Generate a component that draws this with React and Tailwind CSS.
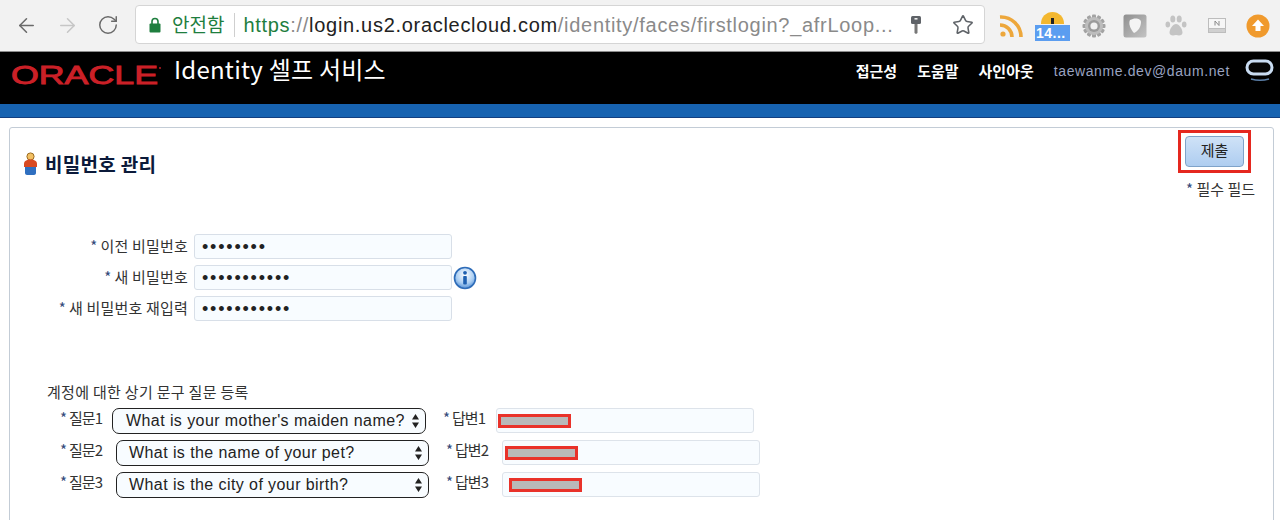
import React from "react";
import { ArrowLeft, ArrowRight, RotateCw, Star } from "lucide-react";

const sans = "font-['Liberation_Sans','Noto_Sans_CJK_KR',sans-serif]";
const kr = "font-['Noto_Sans_CJK_KR',sans-serif]";

function Lock() {
  return (
    <svg width="14" height="18" viewBox="0 0 14 18" className="ml-[12px] shrink-0">
      <path d="M4 8V5.500a3 3 0 0 1 6 0V8" fill="none" stroke="#1e7e3e" strokeWidth="1.600" />
      <rect x="1.500" y="7.500" width="11" height="9" rx="1" fill="#1e7e3e" />
    </svg>
  );
}

function Key() {
  return (
    <svg width="12" height="20" viewBox="0 0 12 20">
      <rect x="1" y="1" width="10" height="8" rx="1.500" fill="#5f6368" />
      <rect x="4.500" y="3" width="3" height="1.600" fill="#eee" />
      <path d="M4.500 9h3v9l-1.500 1-1.500-1z" fill="#777" />
    </svg>
  );
}

function Rss() {
  return (
    <svg width="24" height="24" viewBox="0 0 24 24" fill="none" stroke="#eda73b" strokeWidth="3.600">
      <circle cx="4" cy="20" r="2.600" fill="#eda73b" stroke="none" />
      <path d="M1 11a12 12 0 0 1 12 12" />
      <path d="M1 3a20 20 0 0 1 21 20" />
    </svg>
  );
}

function KeeperBadge() {
  return (
    <div className="relative w-[36px] h-[30px] shrink-0">
      <div className="absolute left-[6px] top-0 w-[23px] h-[12px] rounded-t-full bg-[#f3b72f]" />
      <div className="absolute left-[16px] top-[6px] w-[3px] h-[6px] bg-[#222]" />
      <div className={`absolute left-0 top-[13px] w-[35px] h-[16px] bg-[#5b9df0] text-white text-[14px] leading-[16px] font-bold pl-[1px] tracking-[0.5px] ${sans}`}>14...</div>
    </div>
  );
}

function Gear() {
  const teeth = [0, 30, 60, 90, 120, 150];
  return (
    <svg width="24" height="24" viewBox="0 0 24 24">
      {teeth.map((a) => (
        <rect key={a} x="10" y="0.500" width="4" height="23" rx="1" fill="#a3a3a3" transform={`rotate(${a} 12 12)`} />
      ))}
      <circle cx="12" cy="12" r="9" fill="#bdbdbd" />
      <circle cx="12" cy="12" r="6" fill="#9a9a9a" />
      <circle cx="12" cy="12" r="3.600" fill="#f0f0f0" />
    </svg>
  );
}

function ShieldSquare() {
  return (
    <svg width="24" height="24" viewBox="0 0 24 24">
      <defs>
        <linearGradient id="sq" x1="0" y1="0" x2="1" y2="1">
          <stop offset="0" stopColor="#8f8f8f" />
          <stop offset="1" stopColor="#c4c4c4" />
        </linearGradient>
      </defs>
      <rect x="0.500" y="0.500" width="23" height="23" rx="2.500" fill="url(#sq)" />
      <path d="M7 6c5-3 11-1.500 11 2 0 5-3 9-7 11-3-3-6-9-4-13z" fill="#f4f4f4" />
    </svg>
  );
}

function Paw() {
  return (
    <svg width="22" height="22" viewBox="0 0 22 22" fill="#c4c4c4">
      <ellipse cx="2.800" cy="9.500" rx="2.300" ry="3" />
      <ellipse cx="7.800" cy="4" rx="2.500" ry="3.500" />
      <ellipse cx="14.200" cy="4" rx="2.500" ry="3.500" />
      <ellipse cx="19.200" cy="9.500" rx="2.300" ry="3" />
      <path d="M11 9c3 0 6.500 5 6.500 8.500 0 3-3 3.500-6.500 2.500-3.500 1-6.500.5-6.500-2.500C4.500 14 8 9 11 9z" />
    </svg>
  );
}

function Monitor() {
  return (
    <svg width="18" height="15" viewBox="0 0 18 15">
      <rect x="0.500" y="0.500" width="17" height="14" fill="#f6f6f6" stroke="#bdbdbd" />
      <rect x="0.500" y="10.500" width="17" height="4" fill="#d0d0d0" stroke="#bdbdbd" />
      <path d="M7 7.500V3l4 4.500V3" fill="none" stroke="#8a8a8a" strokeWidth="1" />
    </svg>
  );
}

function UpCircle() {
  return (
    <svg width="24" height="24" viewBox="0 0 24 24">
      <circle cx="12" cy="12" r="11.500" fill="#f09a2d" />
      <path d="M12 5.500l6 6.500h-3.500v5h-5v-5H6z" fill="#fff" />
    </svg>
  );
}

function BrowserBar() {
  return (
    <div className="h-[52px] bg-[#f2f2f2] border-b border-[#8c8c8c] flex items-center pl-[15px] shrink-0">
      <ArrowLeft size={23} strokeWidth={1.6} className="text-[#6a6a6a] mb-[1px]" />
      <ArrowRight size={23} strokeWidth={1.6} className="text-[#c6c6c6] ml-[18px] mb-[1px]" />
      <RotateCw size={22} strokeWidth={1.6} className="text-[#6a6a6a] ml-[18px] mb-[1px]" />
      <div className="ml-[16px] mb-[2px] w-[850px] h-[39px] bg-white border border-[#d5d5d5] rounded-[4px] flex items-center">
        <Lock />
        <span className={`ml-[10px] text-[#1e7e3e] text-[19px] ${kr}`}>안전함</span>
        <span className="ml-[10px] w-px h-[24px] bg-[#cfcfcf]" />
        <span className={`ml-[8px] text-[20px] whitespace-nowrap tracking-[0.7px] ${sans}`}>
          <span className="text-[#1e7e3e]">https</span>
          <span className="text-[#8a8a8a]">://</span>
          <span className="text-[#222]">login.us2.oraclecloud.com</span>
          <span className="text-[#8a8a8a]">/identity/faces/firstlogin?_afrLoop...</span>
        </span>
        <div className="ml-auto flex items-center">
          <Key />
          <Star size={22} strokeWidth={1.7} className="text-[#5f6368] ml-[30px] mr-[10px]" />
        </div>
      </div>
      <div className="ml-[14px] flex items-center">
        <Rss />
        <div className="ml-[12px] mt-[2px]"><KeeperBadge /></div>
        <div className="ml-[11px]"><Gear /></div>
        <div className="ml-[17px]"><ShieldSquare /></div>
        <div className="ml-[18px]"><Paw /></div>
        <div className="ml-[21px]"><Monitor /></div>
        <div className="ml-[20px]"><UpCircle /></div>
      </div>
    </div>
  );
}

function OracleLogo() {
  return (
    <svg width="156" height="36" viewBox="0 0 156 36" className="shrink-0">
      <text x="0" y="29" textLength="147" lengthAdjust="spacingAndGlyphs" fontSize="25" fontFamily="Liberation Sans" fill="#cb2027" stroke="#cb2027" strokeWidth="0.9">ORACLE</text>
      <circle cx="149" cy="13" r="0.900" fill="#cb2027" />
    </svg>
  );
}

function OracleRing() {
  return (
    <svg width="30" height="26" viewBox="0 0 30 26" className="shrink-0">
      <rect x="2" y="2" width="25" height="13" rx="6.500" fill="#050505" stroke="#c9dcf2" strokeWidth="3" />
      <path d="M6 20c5 1.500 13 1.500 18 0" stroke="#5b7fa8" strokeWidth="1.500" fill="none" />
    </svg>
  );
}

function SiteHeader() {
  return (
    <div className="h-[52px] bg-black flex shrink-0 pl-[11px]">
      <div className="mt-[3px]"><OracleLogo /></div>
      <div className={`ml-[7px] mt-[-1px] text-white text-[24px] leading-[36px] tracking-[0.25px] ${kr}`}>Identity 셀프 서비스</div>
      <div className={`ml-auto mt-[9px] flex text-[15px] leading-[20px] font-bold text-white ${kr}`}>
        <span>접근성</span>
        <span className="ml-[20px]">도움말</span>
        <span className="ml-[20px]">사인아웃</span>
        <span className={`ml-[20px] font-normal text-[14px] text-[#99a3c0] tracking-[0.6px] ${sans}`}>taewanme.dev@daum.net</span>
      </div>
      <div className="ml-[15px] mr-[5px] mt-[7px]"><OracleRing /></div>
    </div>
  );
}

function PersonIcon() {
  return (
    <svg width="17" height="24" viewBox="0 0 17 24" className="shrink-0">
      <circle cx="8.500" cy="4.500" r="3.600" fill="#f2c063" stroke="#9a6a1f" />
      <path d="M2 12c0-3 2.500-4.500 6.500-4.500S15 9 15 12v3H2z" fill="#d84a22" />
      <path d="M3 15h11v6c0 1-1 2-2 2H5c-1 0-2-1-2-2z" fill="#2f6fc0" />
    </svg>
  );
}

function InfoIcon() {
  return (
    <svg width="24" height="24" viewBox="0 0 24 24" className="shrink-0">
      <defs>
        <radialGradient id="ib" cx="0.500" cy="0.350" r="0.700">
          <stop offset="0" stopColor="#ffffff" />
          <stop offset="0.600" stopColor="#a9cdf2" />
          <stop offset="1" stopColor="#3f81cf" />
        </radialGradient>
      </defs>
      <circle cx="12" cy="12" r="10.500" fill="url(#ib)" stroke="#2e6cb8" strokeWidth="1.600" />
      <circle cx="12" cy="6.800" r="1.900" fill="#1d5fb0" />
      <rect x="10.200" y="10" width="3.600" height="8.500" rx="0.800" fill="#1d5fb0" />
    </svg>
  );
}

function Label({ children, width, className = "" }) {
  return (
    <div style={{ width }} className={`shrink-0 text-right text-[15px] leading-[20px] text-[#333] whitespace-nowrap ${kr} ${className}`}>
      <span className="text-[#334a7a] pr-[3px]">*</span>{children}
    </div>
  );
}

function PasswordField({ count }) {
  return (
    <div className="w-[258px] h-[25px] shrink-0 bg-[#f8fcff] border border-[#d8dfe8] rounded-[3px] pl-[7px] flex items-center overflow-hidden">
      <span className={`text-[18px] leading-[18px] tracking-[1.8px] text-[#222] whitespace-nowrap ${sans}`}>{"•".repeat(count)}</span>
    </div>
  );
}

function Arrows() {
  return (
    <svg width="9" height="16" viewBox="0 0 9 16" className="shrink-0">
      <path d="M4.500 1L8 6.500H1zM4.500 15L1 9.500h7z" fill="#222" />
    </svg>
  );
}

function Select({ children, width, pad }) {
  return (
    <div style={{ width, paddingLeft: pad }} className="h-[26px] shrink-0 bg-[#f8fcff] border border-[#222] rounded-[7px] pr-[5px] flex items-center justify-between">
      <span className={`text-[16px] leading-[20px] text-[#222] tracking-[0.42px] whitespace-nowrap ${sans}`}>{children}</span>
      <Arrows />
    </div>
  );
}

function AnswerField({ redactPad }) {
  return (
    <div style={{ paddingLeft: redactPad }} className="w-[258px] h-[25px] shrink-0 bg-[#f8fcff] border border-[#dde3ea] rounded-[3px] flex items-center">
      <div className="w-[73px] h-[14px] bg-[#b9b9b9] border-[3px] border-[#e9322a]" />
    </div>
  );
}

function QuestionRow({ q, question, a, selectMargin, selectWidth, pad, answerGap, redactPad }) {
  return (
    <div className="flex items-start h-[32px]">
      <Label width={56} className="ml-[3px] text-left tracking-[-1px]">{q}</Label>
      <div style={{ marginLeft: selectMargin }}><Select width={selectWidth} pad={pad}>{question}</Select></div>
      <div className="ml-[14px]"><Label width={45} className="text-left tracking-[-1px]">{a}</Label></div>
      <div style={{ marginLeft: answerGap }}><AnswerField redactPad={redactPad} /></div>
    </div>
  );
}

export default function App() {
  return (
    <div className={`w-[1280px] h-[520px] overflow-hidden bg-white flex flex-col ${kr}`}>
      <BrowserBar />
      <SiteHeader />
      <div className="h-[14px] bg-[#1763b1] border-b border-[#123f80] shrink-0" />
      <div className="flex-1 pt-[9px] pl-[9px] pr-[6px] min-h-0">
        <div className="h-[420px] border border-[#c3ccd6] rounded-[3px] pl-[12px] pr-[22px]">
          <div className="flex justify-between">
            <div className="flex items-center mt-[24px] h-[24px]">
              <PersonIcon />
              <h1 className="ml-[6px] text-[19px] leading-[24px] font-bold text-[#0b1a3a] tracking-[0.3px]">비밀번호 관리</h1>
            </div>
            <div className="flex flex-col items-end mt-[2px]">
              <div className="w-[73px] h-[43px] border-[3px] border-[#e5281f] flex items-center justify-center">
                <div className="w-[59px] h-[31px] rounded-[4px] bg-gradient-to-b from-[#cfe2f7] to-[#aecdf0] border border-[#7fa3c9] text-center text-[15px] leading-[26px] text-[#222]">제출</div>
              </div>
              <div className="mt-[6px] -mr-[4px] text-[15px] leading-[20px] text-[#333] whitespace-nowrap"><span className="text-[#334a7a]">* </span>필수 필드</div>
            </div>
          </div>

          <div className="mt-[35px] flex flex-col gap-[6px]">
            <div className="flex items-center">
              <Label width={166} className="-mt-[2px] tracking-[0.2px]">이전 비밀번호</Label>
              <div className="ml-[6px]"><PasswordField count={8} /></div>
            </div>
            <div className="flex items-center">
              <Label width={166} className="-mt-[2px] tracking-[0.2px]">새 비밀번호</Label>
              <div className="ml-[6px]"><PasswordField count={11} /></div>
              <div className="ml-[1px]"><InfoIcon /></div>
            </div>
            <div className="flex items-center">
              <Label width={166} className="-mt-[2px] tracking-[0.2px]">새 비밀번호 재입력</Label>
              <div className="ml-[6px]"><PasswordField count={11} /></div>
            </div>
          </div>

          <div className="mt-[61px] ml-[25px] text-[15px] leading-[20px] tracking-[0.3px] text-[#333]">계정에 대한 상기 문구 질문 등록</div>
          <div className="mt-[6px] ml-[21px]">
            <QuestionRow q="질문1" question="What is your mother's maiden name?" a="답변1" selectMargin={10} selectWidth={314} pad={13} answerGap={11} redactPad={1} />
            <QuestionRow q="질문2" question="What is the name of your pet?" a="답변2" selectMargin={14} selectWidth={313} pad={12} answerGap={14} redactPad={2} />
            <QuestionRow q="질문3" question="What is the city of your birth?" a="답변3" selectMargin={14} selectWidth={313} pad={12} answerGap={14} redactPad={6} />
          </div>
        </div>
      </div>
    </div>
  );
}
